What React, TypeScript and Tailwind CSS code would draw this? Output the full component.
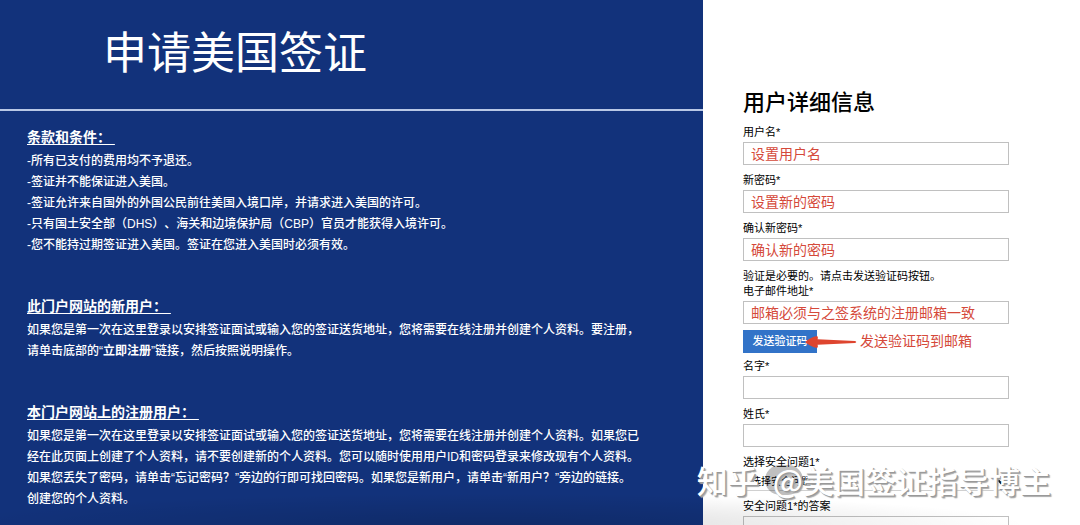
import React from 'react';

const fieldClass =
  'mt-[2px] block h-[23px] w-full border border-[#c0c0c0] bg-white px-[7px] text-[14px] leading-[21px] text-[#d5493a] outline-none placeholder:text-[#d5493a] placeholder:opacity-100';

type FieldProps = { id: string; label: string; hint?: string };

function Field({ id, label, hint }: FieldProps) {
  return (
    <div>
      <label htmlFor={id} className="block leading-[15px]">
        {label}
      </label>
      <input id={id} type="text" placeholder={hint} className={fieldClass} />
    </div>
  );
}

function Section({ title, children }: { title: string; children: React.ReactNode }) {
  return (
    <section>
      <h2 className="mb-px text-[14px] font-bold leading-[25px] underline underline-offset-2">
        {title}
        {'\u00a0'}
      </h2>
      {children}
    </section>
  );
}

function Terms() {
  return (
    <div className="flex w-[65.1%] shrink-0 flex-col bg-[#12327b] font-['Liberation_Sans','Noto_Sans_CJK_SC',sans-serif] text-white">
      <header className="border-b-2 border-[#b9c8e6] pt-[22px] pb-[23px] pl-[103px]">
        <h1 className="text-[44px] leading-[64px]">申请美国签证</h1>
      </header>
      <div className="flex flex-col gap-[38px] pt-[14px] pr-[63px] pl-[27px] text-[12px] font-medium leading-[21px]">
        <Section title="条款和条件：">
          <ul>
            <li>-所有已支付的费用均不予退还。</li>
            <li>-签证并不能保证进入美国。</li>
            <li>-签证允许来自国外的外国公民前往美国入境口岸，并请求进入美国的许可。</li>
            <li>-只有国土安全部（DHS）、海关和边境保护局（CBP）官员才能获得入境许可。</li>
            <li>-您不能持过期签证进入美国。签证在您进入美国时必须有效。</li>
          </ul>
        </Section>
        <Section title="此门户网站的新用户：">
          <p>
            如果您是第一次在这里登录以安排签证面试或输入您的签证送货地址，您将需要在线注册并创建个人资料。要注册，请单击底部的“<b>立即注册</b>”链接，然后按照说明操作。
          </p>
        </Section>
        <Section title="本门户网站上的注册用户：">
          <p>
            如果您是第一次在这里登录以安排签证面试或输入您的签证送货地址，您将需要在线注册并创建个人资料。如果您已经在此页面上创建了个人资料，请不要创建新的个人资料。您可以随时使用用户ID和密码登录来修改现有个人资料。如果您丢失了密码，请单击“忘记密码？”旁边的行即可找回密码。如果您是新用户，请单击“新用户？”旁边的链接。创建您的个人资料。
          </p>
        </Section>
      </div>
    </div>
  );
}

function RegisterForm() {
  return (
    <form className="min-w-0 flex-1 pt-[87px] pr-[71px] pl-10 font-['Liberation_Sans','Noto_Sans_CJK_SC',sans-serif] text-[11px] text-black">
      <h2 className="mb-[6px] text-[22px] font-medium leading-[32px]">用户详细信息</h2>
      <div className="flex flex-col gap-2">
        <Field id="username" label="用户名*" hint="设置用户名" />
        <Field id="password" label="新密码*" hint="设置新的密码" />
        <Field id="confirm" label="确认新密码*" hint="确认新的密码" />
        <div>
          <p className="leading-[15px] whitespace-nowrap">验证是必要的。请点击发送验证码按钮。</p>
          <Field id="email" label="电子邮件地址*" hint="邮箱必须与之签系统的注册邮箱一致" />
        </div>
      </div>
      <div className="my-[6px] flex h-[23px] items-center">
        <button type="button" className="h-full w-[74px] shrink-0 bg-[#3273c8] text-[11px] font-medium text-white">
          发送验证码
        </button>
        <svg viewBox="0 0 52 12" className="-ml-3 h-3 w-[52px] shrink-0" aria-hidden="true">
          <path d="M0 6 Q6 1 12 0 Q13.5 1 12.5 3.2 L50 5 Q52.5 6 50 7 L12.5 8.8 Q13.5 11 12 12 Q6 11 0 6 Z" fill="#de452f" />
        </svg>
        <span className="ml-[3px] text-[14px] whitespace-nowrap text-[#d5493a]">发送验证码到邮箱</span>
      </div>
      <div className="flex flex-col gap-2">
        <Field id="given" label="名字*" />
        <Field id="family" label="姓氏*" />
        <div>
          <label htmlFor="question" className="block leading-[15px]">
            选择安全问题1*
          </label>
          <select
            id="question"
            className="mt-[2px] block h-[19px] w-full border-b border-[#d0d0d0] bg-white px-1 text-[10px] leading-[18px]"
          >
            <option>选择安全问题1</option>
          </select>
        </div>
        <Field id="answer" label="安全问题1*的答案" />
      </div>
    </form>
  );
}

export default function App() {
  return (
    <main lang="zh-CN" className="relative flex h-screen overflow-hidden bg-white [text-spacing-trim:space-all]">
      <Terms />
      <RegisterForm />
      <div className="pointer-events-none absolute inset-x-0 bottom-0 h-8 bg-[radial-gradient(ellipse_50%_100%_at_45%_100%,rgba(0,0,0,0.15),transparent)]" />
      <div className="pointer-events-none absolute right-[29px] bottom-[22px] flex items-center gap-[14px] font-['Noto_Sans_CJK_SC',sans-serif] text-[31px] font-medium leading-[46px] whitespace-nowrap text-white [text-shadow:1px_1px_0_#999,2px_2px_1px_#aaa]">
        <span>知乎</span>
        <span className="flex items-center">
          <span className="-ml-2 rounded-full bg-black/25 pl-2 leading-[30px]">@</span>
          美国签证指导博主
        </span>
      </div>
    </main>
  );
}
